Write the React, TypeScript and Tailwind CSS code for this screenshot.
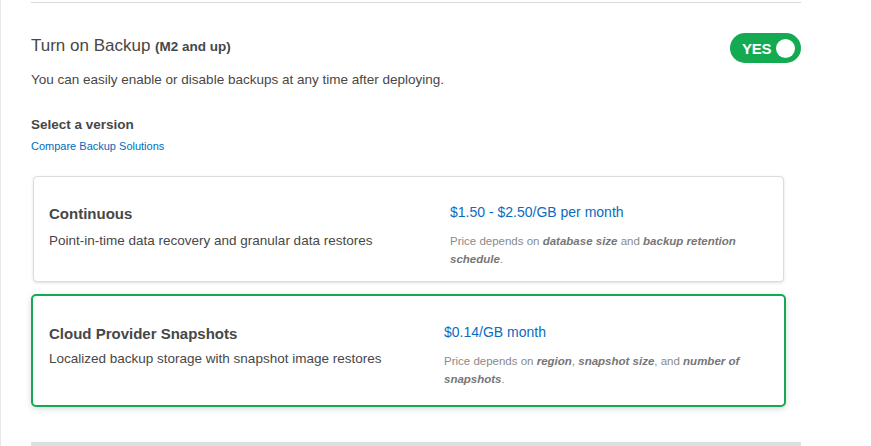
const Toggle = () => (
  <div className="flex items-center w-[71px] h-[30px] rounded-full bg-[#13aa52] pl-[12px] pr-[6px] gap-[5px]">
    <span className="text-white font-bold text-[15px] leading-none tracking-[-0.3px]">YES</span>
    <span className="w-[19px] h-[19px] rounded-full bg-white" />
  </div>
);

const Fine = ({ children }: { children: React.ReactNode }) => (
  <p className="mt-[10px] w-[310px] text-[11.5px] leading-[18px] text-[#8a8a8a]">{children}</p>
);

const B = ({ children }: { children: React.ReactNode }) => (
  <b className="italic font-bold text-[#767676]">{children}</b>
);

export default function App() {
  return (
    <div
      className="w-[871px] h-[446px] overflow-hidden bg-white border-l border-[#e8e8e8] text-[#474747]"
      style={{ fontFamily: '"Liberation Sans", Arial, sans-serif' }}
    >
      <div className="ml-[30px] w-[770px] pt-[2px]">
        <div className="border-t border-[#dadada]" />

        <div className="mt-[30px] flex items-start justify-between">
          <h2 className="pt-[3px] text-[17px] leading-5 font-normal">
            Turn on Backup <span className="font-bold text-[13.5px]">(M2 and up)</span>
          </h2>
          <Toggle />
        </div>

        <p className="mt-[7px] text-[13.5px] leading-5">
          You can easily enable or disable backups at any time after deploying.
        </p>

        <h3 className="mt-[25px] text-[13.5px] leading-5 font-bold">Select a version</h3>
        <a href="#" className="mt-[3px] block text-[11px] leading-4 text-[#006cbc]">
          Compare Backup Solutions
        </a>

        <div className="mt-[22px] ml-[2px] w-[751px] flex items-start border border-[#dcdcdc] rounded-[4px] bg-white pl-[15px] pt-[25px] pb-[13px] shadow-[0_1px_3px_rgba(0,0,0,0.12)]">
          <div className="w-[401px] pt-[1.5px]">
            <div className="text-[15px] leading-5 font-bold">Continuous</div>
            <div className="mt-[7px] text-[13.5px] leading-5">
              Point-in-time data recovery and granular data restores
            </div>
          </div>
          <div>
            <div className="text-[14px] leading-5 text-[#0b6bbd]">$1.50 - $2.50/GB per month</div>
            <Fine>
              Price depends on <B>database size</B> and <B>backup retention schedule</B>.
            </Fine>
          </div>
        </div>

        <div className="mt-[12px] w-[755px] flex items-start border-[2.5px] border-[#13aa52] rounded-[5px] bg-white pl-[16px] pt-[26px] pb-[17px] shadow-[0_2px_6px_rgba(0,0,0,0.15)]">
          <div className="w-[395px] pt-[2px]">
            <div className="text-[15px] leading-5 font-bold">Cloud Provider Snapshots</div>
            <div className="mt-[5px] text-[13.5px] leading-5">
              Localized backup storage with snapshot image restores
            </div>
          </div>
          <div>
            <div className="text-[14px] leading-5 text-[#0b6bbd]">$0.14/GB month</div>
            <Fine>
              Price depends on <B>region</B>, <B>snapshot size</B>, and <B>number of snapshots</B>.
            </Fine>
          </div>
        </div>

        <div className="mt-[35px] h-[6px] bg-[#dde0e0]" />
      </div>
    </div>
  );
}
